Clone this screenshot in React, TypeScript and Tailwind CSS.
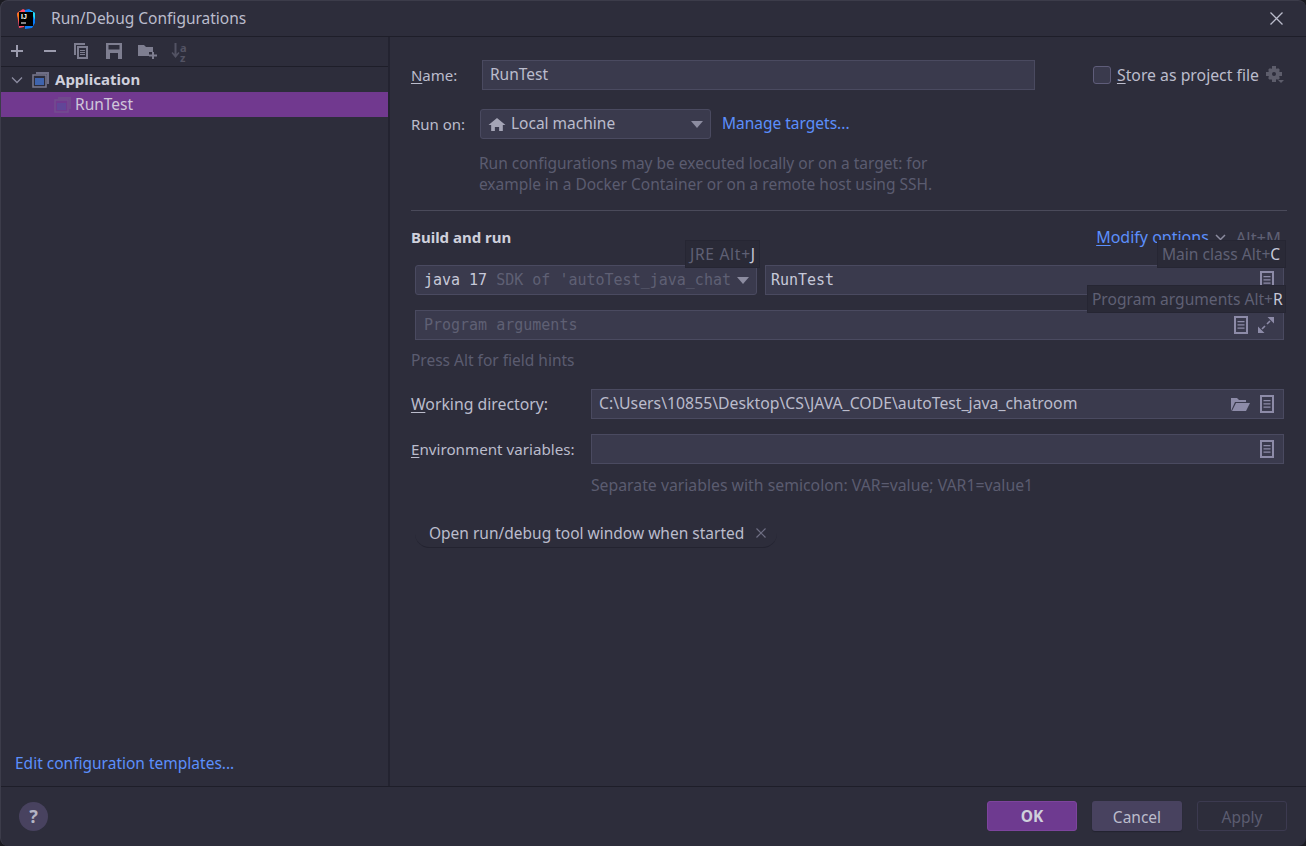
const mono = "font-['DejaVu_Sans_Mono',monospace]";

function DocIcon() {
  return (
    <svg width="14" height="18" viewBox="0 0 14 18">
      <path d="M0 0h14v18H0z M2 2v14h10V2z" fillRule="evenodd" fill="#8d8ba8" />
      <path d="M3.500 5h7v1.300h-7zM3.500 8.300h7v1.300h-7zM3.500 11.500h7v1.300h-7z" fill="#8d8ba8" />
    </svg>
  );
}

function AppIcon({ dim = false }: { dim?: boolean }) {
  return (
    <svg width="18" height="17" viewBox="0 0 18 17" className={dim ? "opacity-30" : ""}>
      <path d="M4 1h13v12h-2V3H4z" fill="#6f6f86" />
      <rect x="1" y="4" width="13" height="12" fill="none" stroke="#7a7a90" strokeWidth="1.500" />
      <rect x="3" y="7" width="9" height="7" fill="#3f64ad" />
    </svg>
  );
}

function Logo() {
  return (
    <svg width="20" height="20" viewBox="0 0 20 20">
      <path d="M1 4 7 0l4 2-3 16-5 1z" fill="#fc4a6b" />
      <path d="M1 5l3-3 3 6-4 5z" fill="#f97a12" />
      <path d="M9 1l4-1 6 4v10l-3 5-7 1z" fill="#087cfa" />
      <path d="M14 1l5 3v7z" fill="#21d7f2" />
      <rect x="3" y="3" width="14" height="14" fill="#000" />
      <text x="5" y="10" fontSize="7" fontWeight="700" fill="#fff" fontFamily="'Liberation Sans',sans-serif">IJ</text>
      <rect x="5" y="13.500" width="5" height="1" fill="#fff" />
    </svg>
  );
}

function Toolbar() {
  return (
    <div className="flex h-[30px] items-center gap-[16px] border-b border-[#1e1e29] pb-[2px] pl-[8px]">
      <svg width="16" height="16" viewBox="0 0 16 16"><path d="M7 2h2v5h5v2H9v5H7V9H2V7h5z" fill="#9c9cae" /></svg>
      <svg width="18" height="16" viewBox="0 0 18 16"><path d="M3 7h12v2H3z" fill="#9c9cae" /></svg>
      <svg width="16" height="18" viewBox="0 0 16 18" className="ml-[-2px] mr-[1px]"><path d="M1 1h11v2H3v10H1z" fill="#7e7e90" /><path d="M4 4h11v13H4zM6 6v9h7V6z" fillRule="evenodd" fill="#7e7e90" /><path d="M7 8h5v1H7zM7 10h5v1H7zM7 12h5v1H7z" fill="#7e7e90" /></svg>
      <svg width="16" height="16" viewBox="0 0 16 16"><path d="M0 0h16v16H0zM2.500 2v4.500h11V2zM4 10v6h8v-6z" fillRule="evenodd" fill="#7e7e90" /></svg>
      <svg width="19" height="16" viewBox="0 0 19 16"><path d="M0 2h6l2 2h7v5h-4v4H0z" fill="#7e7e90" /><path d="M14 9h2v2.500h3v2h-3V16h-2v-2.500h-3v-2h3z" fill="#7e7e90" /></svg>
      <div className="relative ml-[-2px] h-[18px] w-[18px] opacity-40">
        <svg width="9" height="16" viewBox="0 0 9 16" className="absolute left-0 top-[1px]"><path d="M3.500 0h2v11l2-2 1 1-4 5-4-5 1-1 2 2z" fill="#8c8ca0" /></svg>
        <span className="absolute left-[9px] top-[-5px] text-[11px] font-bold text-[#8c8ca0]">a</span>
        <span className="absolute left-[9px] top-[5px] text-[11px] font-bold text-[#8c8ca0]">z</span>
      </div>
    </div>
  );
}

function Sidebar() {
  return (
    <div className="flex w-[389px] flex-col border-r-2 border-[#232330]">
      <Toolbar />
      <div className="flex h-[25px] items-center pl-[10px]">
        <svg width="12" height="8" viewBox="0 0 12 8"><path d="M1 1.500l5 5 5-5" fill="none" stroke="#8c8ca0" strokeWidth="1.300" /></svg>
        <span className="ml-[9px]"><AppIcon /></span>
        <span className="ml-[5px] text-[15px] font-bold text-[#cfd0dc]">Application</span>
      </div>
      <div className="flex h-[25px] items-center bg-[#71398f] pl-[53px]">
        <AppIcon dim />
        <span className="ml-[3px] text-[#cfc6da]">RunTest</span>
      </div>
      <div className="flex-1" />
      <a className="mb-[12px] ml-[14px] text-[#5c8ffc]">Edit configuration templates...</a>
    </div>
  );
}

function Label({ u, rest, className = "" }: { u: string; rest: string; className?: string }) {
  return (
    <span className={`whitespace-nowrap text-[#bbbccc] ${className}`}>
      <span className="underline underline-offset-2">{u}</span>
      {rest}
    </span>
  );
}

function Tip({ text, k, className }: { text: string; k: string; className: string }) {
  return (
    <div className={`absolute flex h-[28px] items-center whitespace-pre border border-[#262633] bg-[#2a2a37] pl-[4px] text-[15.600px] text-[#5f6074] ${className}`}>
      {text} Alt+<span className="text-[#c6c8d8]">{k}</span>
    </div>
  );
}

function Form() {
  return (
    <div className="relative flex-1 pl-[21px] pr-[22px] pt-[23px]">
      <div className="flex h-[30px] items-center">
        <div className="w-[71px]"><Label u="N" rest="ame:" className="text-[15px]" /></div>
        <div className="flex h-[30px] w-[553px] items-center border border-[#4a4a60] bg-[#3a3a4d] pb-[2px] pl-[7px] text-[#bbbccc]">RunTest</div>
        <div className="ml-[58px] h-[18px] w-[18px] rounded-[3px] border border-[#5f5d7a] bg-[#3a3a4d]" />
        <div className="ml-[6px]"><Label u="S" rest="tore as project file" className="text-[15.800px]" /></div>
        <svg width="18" height="18" viewBox="0 0 18 18" className="ml-[7px]">
          <circle cx="8" cy="8" r="4" fill="none" stroke="#5d5d6b" strokeWidth="4" />
          <path d="M6 0h4v3H6zM6 13h4v3H6zM0 6h3v4H0zM13 6h3v4h-3zM2 4l2-2 2 2-2 2zM10 4l2-2 2 2-2 2zM2 12l2-2 2 2-2 2zM10 12l2-2 2 2-2 2z" fill="#5d5d6b" />
          <path d="M12 14h6l-3 3z" fill="#5d5d6b" />
        </svg>
      </div>

      <div className="mt-[19px] flex h-[30px] items-center">
        <div className="w-[69px] text-[15px] text-[#bbbccc]">Run on:</div>
        <div className="flex h-[30px] w-[231px] items-center rounded-[3px] border border-[#4a4a60] bg-[#3a3a4d] pl-[7px] pr-[7px] text-[#bbbccc]">
          <svg width="18" height="15" viewBox="0 0 17 15" preserveAspectRatio="none"><path d="M8.500 1 16.500 8H14v6h-3.500v-4h-4v4H3V8H.500z" fill="#a5a5b6" /></svg>
          <span className="mb-[2px] ml-[5px] flex-1">Local machine</span>
          <svg width="12" height="7" viewBox="0 0 12 7"><path d="M0 0h12L6 7z" fill="#8c8ca0" /></svg>
        </div>
        <a className="mb-[2px] ml-[11px] text-[#5c8ffc]">Manage targets...</a>
      </div>

      <div className="ml-[68px] mt-[14px] text-[#5b5c70]">
        Run configurations may be executed locally or on a target: for
        <br />
        example in a Docker Container or on a remote host using SSH.
      </div>

      <div className="mr-[-3px] mt-[15px] h-px bg-[#4a4a5a]" />

      <div className="mt-[14px] flex h-[24px] items-center">
        <span className="flex-1 text-[15px] font-bold text-[#cfd0dc]">Build and run</span>
        <span className="text-[16px] text-[#5c8ffc]"><span className="underline underline-offset-2">M</span>odify options</span>
        <svg width="11" height="7" viewBox="0 0 11 7" className="ml-[6px]"><path d="M1 1l4.500 4.500L10 1" fill="none" stroke="#8c8ca0" strokeWidth="1.500" /></svg>
        <span className="ml-[10px] mr-[3px] text-[16.500px] text-[#5f6074]">Alt+M</span>
      </div>

      <div className="mt-[16px] flex gap-[8px] pl-[4px]">
        <div className={`flex h-[30px] w-[342px] items-center rounded-[3px] border border-[#4a4a60] bg-[#3a3a4d] pl-[8px] ${mono} text-[15px]`}>
          <span className="whitespace-nowrap text-[#c6c8d8]">java 17 <span className="text-[#5f6074]">SDK of 'autoTest_java_chat</span></span>
          <svg width="12" height="7" viewBox="0 0 12 7" className="ml-[6px]"><path d="M0 0h12L6 7z" fill="#8c8ca0" /></svg>
        </div>
        <div className={`flex h-[30px] flex-1 items-center border border-[#4a4a60] bg-[#3a3a4d] pl-[5px] pr-[9px] text-[15px] text-[#c6c8d8] ${mono}`}>
          <span className="flex-1">RunTest</span>
          <DocIcon />
        </div>
      </div>

      <div className={`ml-[4px] mt-[15px] flex h-[30px] items-center gap-[10px] border border-[#4a4a60] bg-[#3a3a4d] pl-[8px] pr-[9px] text-[15px] text-[#5f6074] ${mono}`}>
        <span className="flex-1">Program arguments</span>
        <DocIcon />
        <svg width="16" height="16" viewBox="0 0 16 16">
          <path d="M9.500 0H16v6.500z M6.500 16H0V9.500z" fill="#8d8ba8" />
          <path d="M12 4 9 7M4 12l3-3" stroke="#8d8ba8" strokeWidth="1.600" />
        </svg>
      </div>

      <div className="mt-[10px] text-[#5b5c70]">Press Alt for field hints</div>

      <div className="mt-[18px] flex h-[30px] items-center">
        <div className="w-[180px]"><Label u="W" rest="orking directory:" className="text-[15.800px]" /></div>
        <div className="flex h-[30px] flex-1 items-center gap-[10px] border border-[#4a4a60] bg-[#3a3a4d] pl-[7px] pr-[9px] text-[15.800px] text-[#bbbccc]">
          <span className="mb-[2px] flex-1">C:\Users\10855\Desktop\CS\JAVA_CODE\autoTest_java_chatroom</span>
          <svg width="19" height="15" viewBox="0 0 19 15"><path d="M0 1h6l2 2h7v2H4L0 14z" fill="#8d8ba8" /><path d="M5 6h14l-4 8H1z" fill="#8d8ba8" /></svg>
          <DocIcon />
        </div>
      </div>

      <div className="mt-[15px] flex h-[30px] items-center">
        <div className="w-[180px]"><Label u="E" rest="nvironment variables:" className="text-[15.200px]" /></div>
        <div className="flex h-[30px] flex-1 items-center justify-end border border-[#4a4a60] bg-[#3a3a4d] pr-[9px]">
          <DocIcon />
        </div>
      </div>

      <div className="ml-[180px] mt-[11px] text-[15.800px] text-[#5b5c70]">Separate variables with semicolon: VAR=value; VAR1=value1</div>

      <div className="ml-[4px] mt-[23px] flex h-[29px] w-[362px] items-center gap-[12px] rounded-full border-b border-[#232330] pl-[14px] text-[#bbbccc]">
        Open run/debug tool window when started
        <svg width="10" height="10" viewBox="0 0 10 10"><path d="M.500.500l9 9M9.500.500l-9 9" stroke="#6f6f84" strokeWidth="1.200" /></svg>
      </div>

      <Tip text="JRE" k="J" className="left-[295px] top-[203px] w-[75px] tracking-[0.7px]" />
      <Tip text="Main class" k="C" className="left-[767px] top-[203px] w-[129px]" />
      <Tip text="Program arguments" k="R" className="left-[697px] top-[248px] w-[199px]" />
    </div>
  );
}

export default function App() {
  return (
    <div className="h-[846px] w-[1306px] bg-[#1b1b22]">
      <div className="flex h-full flex-col rounded-[8px] border-l border-t border-[#3c3c4a] bg-[#2d2d3b] font-['Noto_Sans',sans-serif] text-[15.500px] leading-[21px]">
        <div className="flex h-[36px] items-center border-b border-[#1e1e29] pl-[15px] pr-[23px]">
          <Logo />
          <span className="ml-[15px] flex-1 text-[#bbbccc]">Run/Debug Configurations</span>
          <svg width="13" height="13" viewBox="0 0 13 13"><path d="M.500.500l12 12M12.500.500l-12 12" stroke="#bbbccc" strokeWidth="1.300" /></svg>
        </div>
        <div className="flex flex-1">
          <Sidebar />
          <Form />
        </div>
        <div className="flex h-[60px] items-center border-t border-[#1e1e29] pb-[1px] pl-[18px] pr-[19px]">
          <div className="flex h-[29px] w-[29px] items-center justify-center rounded-full bg-[#48425f] text-[18px] font-bold text-[#b4b4c4]">?</div>
          <div className="flex-1" />
          <button className="h-[30px] w-[90px] rounded-[3px] border border-[#7d449d] bg-[#6e3a90] pt-[1px] font-bold text-[#cfd0dc]">OK</button>
          <button className="ml-[15px] h-[30px] w-[90px] rounded-[3px] bg-[#48425f] pt-[2px] text-[#bbbccc] shadow-[0_1px_1px_#232330]">Cancel</button>
          <button className="ml-[15px] h-[30px] w-[90px] rounded-[3px] border border-[#3c3a50] pt-[2px] text-[#5b5c70]">Apply</button>
        </div>
      </div>
    </div>
  );
}
